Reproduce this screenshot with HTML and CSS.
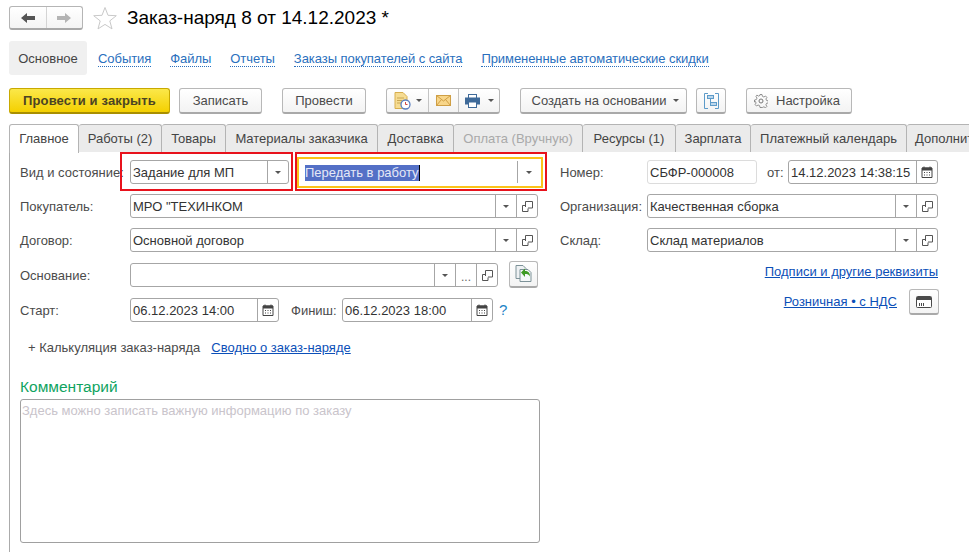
FILE: index.html
```html
<!DOCTYPE html>
<html lang="ru">
<head>
<meta charset="utf-8">
<title>Заказ-наряд 8 от 14.12.2023</title>
<link rel="stylesheet" href="styles.css">
</head>
<body>
<svg class="sprite" aria-hidden="true">
  <symbol id="i-open" viewBox="0 0 11 11"><path d="M3.500 6V.5h7v6.500H6M.5 4.500h3M.5 4.500v6h5.500V7.500" fill="none" stroke="#555"/></symbol>
  <symbol id="i-cal" viewBox="0 0 12 12"><path d="M1 2h10v9.500H1z" fill="#fff" stroke="#444"/><path d="M1 1.500h10V4.500H1z" fill="#444"/><path d="M3 .5v2M9 .5v2" stroke="#444"/><path d="M3 6h1v1H3zM5.500 6h1v1h-1zM8 6h1v1H8zM3 8.500h1v1H3zM5.500 8.500h1v1h-1zM8 8.500h1v1H8z" fill="#444"/></symbol>
</svg>

<header class="head">
  <div class="nav">
    <span class="nav-cell"><svg width="14" height="12" viewBox="0 0 14 12"><path d="M0 6l6-5v3h8v4H6v3z" fill="#555"/></svg></span>
    <span class="nav-cell"><svg width="14" height="12" viewBox="0 0 14 12"><path d="M14 6L8 1v3H0v4h8v3z" fill="#b4b4b4"/></svg></span>
  </div>
  <svg class="star" width="24" height="24" viewBox="0 0 24 24"><path d="M12 1.500l3 7.800 8.300.4-6.500 5.200 2.200 8L12 18.400l-7 4.500 2.200-8L.7 9.700 9 9.300z" fill="#fff" stroke="#c9c9c9"/></svg>
  <h1 class="title">Заказ-наряд 8 от 14.12.2023 *</h1>
</header>

<nav class="sections">
  <span class="section-current">Основное</span>
  <a class="section">События</a>
  <a class="section">Файлы</a>
  <a class="section">Отчеты</a>
  <a class="section">Заказы покупателей с сайта</a>
  <a class="section">Примененные автоматические скидки</a>
</nav>

<div class="toolbar">
  <button class="btn btn-main">Провести и закрыть</button>
  <button class="btn btn-save">Записать</button>
  <button class="btn btn-post">Провести</button>
  <div class="btn group">
    <span class="group-cell cell-a">
      <svg width="17" height="18" viewBox="0 0 17 18"><path d="M1 .5h8l4 4v12H1z" fill="#f6dc92" stroke="#d7ae4e"/><path d="M3 6h7M3 8.500h5M3 11h4" stroke="#c9a650"/><circle cx="11.500" cy="12.500" r="4.500" fill="#fff" stroke="#5a7fc0" stroke-width="1.300"/><path d="M11.500 10v2.500h2" stroke="#d2473f" fill="none"/></svg>
      <i class="caret"></i>
    </span>
    <span class="group-cell cell-b">
      <svg width="15" height="11" viewBox="0 0 15 11"><rect x=".5" y=".5" width="14" height="10" fill="#f8d68a" stroke="#cf9f45"/><path d="M.5.500l7 5.500 7-5.500M.5 10.500l5-6M14.500 10.500l-5-6" fill="none" stroke="#cf9f45"/></svg>
    </span>
    <span class="group-cell cell-c">
      <svg width="15" height="14" viewBox="0 0 15 14"><rect x="3.500" y=".5" width="8" height="4" fill="#fff" stroke="#3f6a99"/><rect x=".5" y="4" width="14" height="6" fill="#3f6a99" stroke="#3f6a99"/><rect x="3.500" y="8" width="8" height="5.500" fill="#fff" stroke="#3f6a99"/></svg>
      <i class="caret"></i>
    </span>
  </div>
  <button class="btn btn-create">Создать на основании<i class="caret"></i></button>
  <button class="btn btn-struct">
    <svg width="15" height="16" viewBox="0 0 15 16" fill="none" stroke="#5d9bc9"><path d="M4 .5H.5v15H4M11 .5h3.500v15H11"/><rect x="3.500" y="2.500" width="6" height="3" fill="#bcd7ec"/><rect x="6.500" y="9.500" width="6" height="3" fill="#bcd7ec"/><path d="M6.500 5.500v4"/></svg>
  </button>
  <button class="btn btn-settings">
    <svg width="14" height="14" viewBox="0 0 14 14" fill="none" stroke="#777"><circle cx="7" cy="7" r="2"/><path d="M6 .5h2l.4 1.800 1.500.7 1.600-1 1.400 1.400-1 1.600.7 1.500 1.800.4v2l-1.800.4-.7 1.500 1 1.600-1.400 1.400-1.600-1-1.500.7L8 13.500H6l-.4-1.800-1.500-.7-1.600 1-1.400-1.400 1-1.600-.7-1.500L.5 8V6l1.800-.4.7-1.500-1-1.600L2.900 1.100l1.600 1 1.500-.7z" stroke-width=".8"/></svg>
    Настройка
  </button>
</div>

<div class="tabs">
  <span class="tab tab-on t1">Главное</span>
  <span class="tab t2">Работы (2)</span>
  <span class="tab t3">Товары</span>
  <span class="tab t4">Материалы заказчика</span>
  <span class="tab t5">Доставка</span>
  <span class="tab tab-off t6">Оплата (Вручную)</span>
  <span class="tab t7">Ресурсы (1)</span>
  <span class="tab t8">Зарплата</span>
  <span class="tab t9">Платежный календарь</span>
  <span class="tab t10">Дополнительно</span>
</div>

<main class="panel">
  <section class="col-left">
    <div class="row">
      <label class="lbl">Вид и состояние:</label>
      <div class="mark-wrap w-kind">
        <span class="mark mark-kind"></span>
        <div class="field">
          <span class="val">Задание для МП</span>
          <span class="fbtn fbtn-kind"><i class="caret"></i></span>
        </div>
      </div>
      <div class="mark-wrap w-state">
        <span class="mark mark-state"></span>
        <span class="mark mark-focus"></span>
        <div class="field field-focus">
          <span class="val"><span class="sel">Передать в работу</span></span>
          <span class="fbtn fbtn-state"><i class="caret"></i></span>
        </div>
      </div>
    </div>
    <div class="row">
      <label class="lbl">Покупатель:</label>
      <div class="field grow">
        <span class="val">МРО "ТЕХИНКОМ</span>
        <span class="fbtn"><i class="caret"></i></span>
        <span class="fbtn"><svg class="ico-open" viewBox="0 0 11 11"><use href="#i-open"/></svg></span>
      </div>
    </div>
    <div class="row row-tall">
      <label class="lbl">Договор:</label>
      <div class="field grow">
        <span class="val">Основной договор</span>
        <span class="fbtn"><i class="caret"></i></span>
        <span class="fbtn"><svg class="ico-open" viewBox="0 0 11 11"><use href="#i-open"/></svg></span>
      </div>
    </div>
    <div class="row row-tall">
      <label class="lbl">Основание:</label>
      <div class="field grow">
        <span class="val"></span>
        <span class="fbtn"><i class="caret"></i></span>
        <span class="fbtn fbtn-dots">...</span>
        <span class="fbtn"><svg class="ico-open" viewBox="0 0 11 11"><use href="#i-open"/></svg></span>
      </div>
      <button class="btn btn-base">
        <svg width="18" height="17" viewBox="0 0 18 17"><path d="M1 .5h7l3 3v10H1z" fill="#eef1f3" stroke="#7d9298"/><path d="M5 4.500h8l3 3v9H5z" fill="#f6f8f8" stroke="#7d9298"/><path d="M6 7.500l4-4v2.500c3 0 5 1.500 5 5.500-1-2-2.500-2.500-5-2.500v3z" fill="#3e9a22"/></svg>
      </button>
    </div>
    <div class="row">
      <label class="lbl">Старт:</label>
      <div class="field f-start">
        <span class="val">06.12.2023 14:00</span>
        <span class="fbtn"><svg class="ico-cal" viewBox="0 0 12 12"><use href="#i-cal"/></svg></span>
      </div>
      <label class="lbl-finish">Финиш:</label>
      <div class="field f-finish">
        <span class="val">06.12.2023 18:00</span>
        <span class="fbtn"><svg class="ico-cal" viewBox="0 0 12 12"><use href="#i-cal"/></svg></span>
      </div>
      <span class="help">?</span>
    </div>
    <div class="calc">
      <span class="calc-add">+ Калькуляция заказ-наряда</span>
      <a class="link">Сводно о заказ-наряде</a>
    </div>
    <h2 class="comment-title">Комментарий</h2>
    <div class="comment">Здесь можно записать важную информацию по заказу</div>
  </section>

  <section class="col-right">
    <div class="row">
      <label class="lbl lbl-r">Номер:</label>
      <div class="field f-num"><span class="val">СБФР-000008</span></div>
      <label class="lbl-from">от:</label>
      <div class="field f-date">
        <span class="val">14.12.2023 14:38:15</span>
        <span class="fbtn"><svg class="ico-cal" viewBox="0 0 12 12"><use href="#i-cal"/></svg></span>
      </div>
    </div>
    <div class="row">
      <label class="lbl lbl-r">Организация:</label>
      <div class="field grow">
        <span class="val">Качественная сборка</span>
        <span class="fbtn"><i class="caret"></i></span>
        <span class="fbtn"><svg class="ico-open" viewBox="0 0 11 11"><use href="#i-open"/></svg></span>
      </div>
    </div>
    <div class="row">
      <label class="lbl lbl-r">Склад:</label>
      <div class="field grow">
        <span class="val">Склад материалов</span>
        <span class="fbtn"><i class="caret"></i></span>
        <span class="fbtn"><svg class="ico-open" viewBox="0 0 11 11"><use href="#i-open"/></svg></span>
      </div>
    </div>
    <div class="right-links">
      <a class="link">Подписи и другие реквизиты</a>
    </div>
    <div class="retail">
      <a class="link">Розничная • с НДС</a>
      <button class="btn btn-card">
        <svg width="16" height="12" viewBox="0 0 16 12"><rect x=".5" y=".5" width="15" height="11" rx="1" fill="#fff" stroke="#4a4a4a"/><rect x="1" y="1" width="14" height="3" fill="#4a4a4a"/><path d="M3 7h1v3H3zM5 7h1v3H5zM7 7h1v3H7z" fill="#4a4a4a"/></svg>
      </button>
    </div>
  </section>
</main>
</body>
</html>
```

FILE: styles.css
```css
* { box-sizing: border-box; }
html, body { margin: 0; padding: 0; }
body {
  width: 969px;
  height: 552px;
  overflow: hidden;
  background: #fff;
  font: 13px/16px "Liberation Sans", Arial, sans-serif;
  color: #4b4b4b;
}
.sprite { display: none; }

.head { display: flex; align-items: center; height: 24px; margin: 6px 0 0 9px; }
.nav {
  display: flex; width: 74px; height: 24px;
  border: 1px solid #b5b5b5; border-bottom: 2px solid #a8a8a8; border-radius: 3px;
  background: linear-gradient(#fff, #f4f4f4);
}
.nav-cell { flex: 1; display: flex; align-items: center; justify-content: center; }
.nav-cell + .nav-cell { border-left: 1px solid #d4d4d4; }
.star { margin-left: 10px; }
.title { margin: 0 0 0 10px; font: 400 19px/24px "Liberation Sans", Arial, sans-serif; color: #000; }

.sections { display: flex; align-items: center; height: 34px; margin: 11px 0 0 9px; }
.section-current {
  width: 78px; height: 34px; display: flex; align-items: center; justify-content: center;
  padding-top: 1px; background: #f0f0f0; border-radius: 3px; color: #444;
}
.section {
  margin-left: 19px; margin-top: 2px; letter-spacing: -.06px; line-height: 14px;
  color: #2a6fbd; border-bottom: 1px dotted #2a6fbd;
}
.sections .section-current + .section { margin-left: 11px; }

.toolbar { display: flex; height: 26px; margin: 13px 0 0 9px; }
.btn {
  display: flex; align-items: center; justify-content: center; padding: 0; height: 26px;
  font: inherit; color: #4b4b4b;
  background: linear-gradient(#fff, #f3f3f3);
  border: 1px solid #b8b8b8; border-bottom: 2px solid #a9a9a9; border-radius: 3px;
}
.btn-main {
  width: 161px; font-weight: 700; letter-spacing: .15px; color: #4b4423;
  background: linear-gradient(#fbe84a, #f4d000);
  border-color: #c8a900; border-bottom-color: #a98f00;
}
.btn-save { width: 83px; margin-left: 9px; }
.btn-post { width: 84px; margin-left: 20px; }
.group { width: 114px; margin-left: 20px; justify-content: flex-start; }
.group-cell { height: 100%; display: flex; align-items: center; }
.cell-a { width: 41px; padding-left: 7px; gap: 5px; }
.cell-b { width: 30px; border-left: 1px solid #c4c4c4; justify-content: center; }
.cell-c { width: 41px; border-left: 1px solid #c4c4c4; padding-left: 6px; gap: 8px; }
.btn-create { width: 167px; margin-left: 20px; gap: 7px; padding-left: 4px; }
.btn-struct { width: 30px; margin-left: 9px; }
.btn-settings { width: 106px; margin-left: 20px; gap: 8px; padding-right: 4px; }

.caret {
  display: inline-block; width: 0; height: 0;
  border: 3px solid transparent; border-top: 3px solid #555; border-bottom: 0;
}

.tabs { display: flex; height: 28px; margin: 10px 0 0 9px; border-bottom: 1px solid #ababab; }
.tab {
  flex: none; height: 28px; padding-top: 6px; text-align: center; white-space: nowrap;
  background: #ebebeb; color: #444;
  border: 1px solid #b4b4b4; border-left: 0; border-bottom: 0; border-radius: 3px 3px 0 0;
}
.tab-on { background: #fff; border-left: 1px solid #b4b4b4; height: 29px; position: relative; z-index: 1; }
.tab-off { color: #a9a9a9; }
.t1 { width: 70px; } .t2 { width: 83px; } .t3 { width: 64px; } .t4 { width: 152px; }
.t5 { width: 76px; } .t6 { width: 129px; } .t7 { width: 93px; } .t8 { width: 75px; }
.t9 { width: 156px; } .t10 { width: 100px; text-align: left; padding-left: 8px; }

.panel {
  display: flex; height: 400px; margin-left: 9px; padding: 8px 0 0 10px;
  border-left: 1px solid #ababab;
}
.col-left { width: 520px; flex: none; }
.col-right { width: 378px; margin-left: 20px; flex: none; }

.row { display: flex; align-items: center; height: 24px; margin-bottom: 10px; }
.row-tall { margin-bottom: 11px; }
.col-left .row { padding-right: 2px; }
.lbl { width: 110px; flex: none; white-space: nowrap; padding-top: 2px; }
.lbl-r { width: 87px; }
.lbl-finish { margin-left: 12px; width: 51px; flex: none; padding-top: 2px; }
.lbl-from { margin-left: 10px; width: 21px; flex: none; padding-top: 2px; }
.help { margin-left: 6px; color: #1c83c6; font-size: 15px; }

.field {
  display: flex; align-items: stretch; height: 24px; background: #fff;
  border: 1px solid #a6a6a6; border-radius: 3px; color: #333;
}
.grow { flex: 1; min-width: 0; }
.val { flex: 1; min-width: 0; padding-left: 2px; line-height: 24px; white-space: nowrap; overflow: hidden; }
.fbtn {
  width: 21px; flex: none; display: flex; align-items: center; justify-content: center;
  border-left: 1px solid #a6a6a6; color: #666;
}
.fbtn-dots { padding-bottom: 2px; align-items: flex-end; line-height: 14px; font-size: 12px; }
.ico-open { width: 11px; height: 11px; }
.ico-cal { width: 12px; height: 12px; }

.mark-wrap { position: relative; flex: none; }
.w-kind { width: 159px; margin-right: 15px; }
.w-state { width: 238px; }
.mark { position: absolute; pointer-events: none; z-index: 2; }
.mark-kind { top: -8px; bottom: -7px; left: -10px; right: -4px; border: 2px solid #e8121c; }
.mark-state { top: -8px; bottom: -7px; left: -9px; right: -5px; border: 2px solid #e8121c; }
.mark-focus { top: -3px; bottom: -4px; left: -7px; right: -1px; border: 2px solid #fbc318; }
.field-focus { border-color: transparent; }
.fbtn-kind { width: 21px; }
.fbtn-state { width: 24px; padding-right: 2px; }
.w-state .val { padding-left: 0; display: flex; align-items: center; }
.sel {
  margin-left: -1px; padding-left: 1px; height: 16px; line-height: 16px; margin-top: 2px;
  background: #5470c6; color: #e6e9f7; border-right: 1px solid #000;
}

.f-start { width: 149px; }
.f-finish { width: 151px; }
.f-num { width: 110px; border-color: #dcdcdc; }
.f-date { width: 150px; }
.btn-base { width: 29px; height: 27px; margin-left: 11px; margin-top: -2px; flex: none; }
.btn-card { width: 30px; height: 26px; margin-left: 12px; margin-right: -1px; flex: none; }

.link { color: #0b4fb8; text-decoration: underline; }
.calc { display: flex; margin: 18px 0 0 8px; gap: 11px; height: 16px; }
.calc-add { color: #4b4b4b; }
.comment-title { margin: 21px 0 0; font: 400 15.500px/20px "Liberation Sans", Arial, sans-serif; color: #0fa35f; }
.comment {
  width: 520px; height: 144px; margin-top: 2px; padding: 3px 1px; color: #c9c4cb;
  border: 1px solid #a0a0a0; border-radius: 3px; background: #fff;
}

.right-links { text-align: right; height: 16px; margin-top: 12px; }
.retail { display: flex; align-items: center; justify-content: flex-end; margin-top: 9px; height: 26px; }
```
